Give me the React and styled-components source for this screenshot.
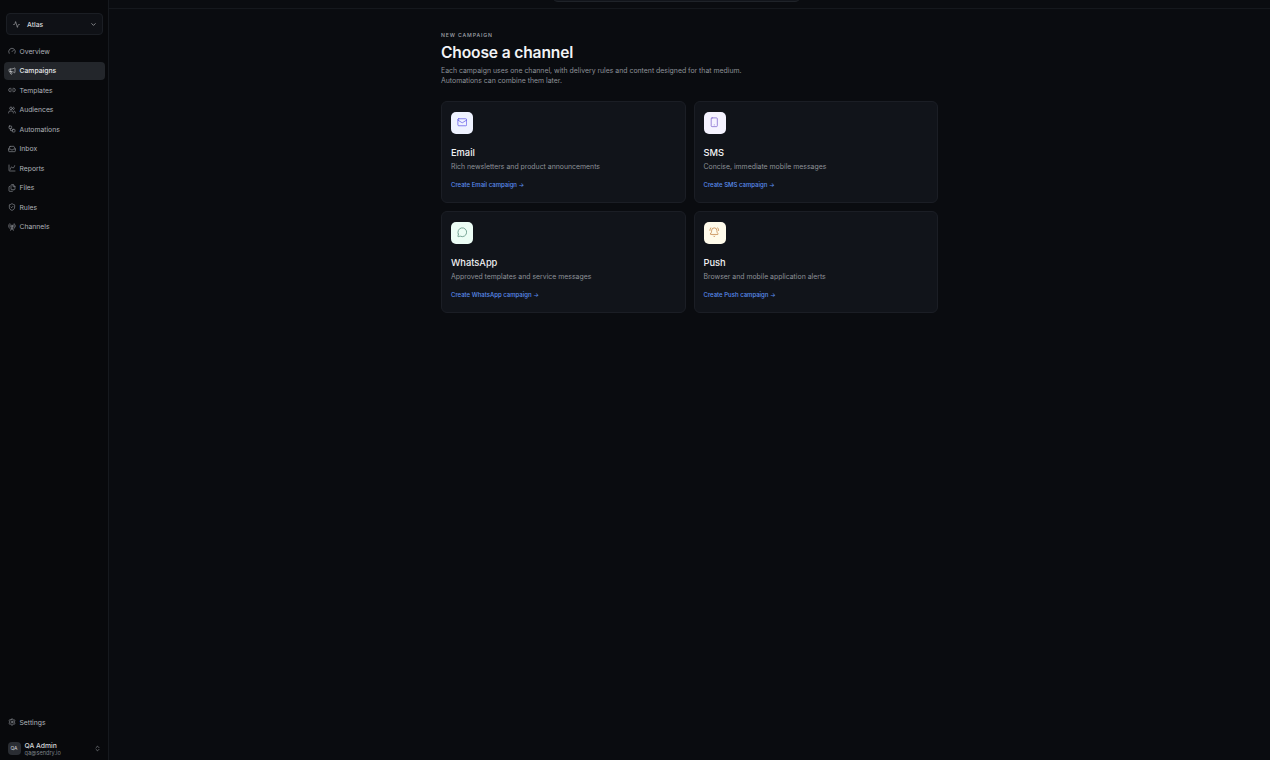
import React from 'react'
import styled, { createGlobalStyle } from 'styled-components'
import {
  Activity, ChevronDown, Gauge, Megaphone, Link2, Users, Workflow, Inbox, ChartSpline, Files,
  ShieldCheck, RadioTower, Settings, Mail, Smartphone, MessageCircle, BellRing, ChevronsUpDown
} from 'lucide-react'

const navItems = [
  { label: 'Overview', icon: Gauge },
  { label: 'Campaigns', icon: Megaphone, active: true },
  { label: 'Templates', icon: Link2 },
  { label: 'Audiences', icon: Users },
  { label: 'Automations', icon: Workflow },
  { label: 'Inbox', icon: Inbox },
  { label: 'Reports', icon: ChartSpline },
  { label: 'Files', icon: Files },
  { label: 'Rules', icon: ShieldCheck },
  { label: 'Channels', icon: RadioTower },
]

const channels = [
  { name: 'Email', text: 'Rich newsletters and product announcements', icon: Mail, bg: '#eef2ff', fg: '#4f46e5' },
  { name: 'SMS', text: 'Concise, immediate mobile messages', icon: Smartphone, bg: '#f5f3ff', fg: '#6d4fc7' },
  { name: 'WhatsApp', text: 'Approved templates and service messages', icon: MessageCircle, bg: '#ecfdf5', fg: '#3f7a68' },
  { name: 'Push', text: 'Browser and mobile application alerts', icon: BellRing, bg: '#fffbeb', fg: '#b8702a' },
]

function App() {
  return (
    <>
      <GlobalStyle />
      <Shell>
        <Sidebar>
          <Brand>
            <BrandMark />
            <BrandName>Sendry</BrandName>
          </Brand>
          <Workspace>
            <WorkspaceIcon><Activity size={7} strokeWidth={1.6} /></WorkspaceIcon>
            <WorkspaceName>Atlas</WorkspaceName>
            <ChevronDown size={7} strokeWidth={2} />
          </Workspace>
          <Nav>
            {navItems.map(({ label, icon: Icon, active }) => (
              <NavItem key={label} $active={active}>
                <Icon size={8} strokeWidth={1.6} />
                {label}
              </NavItem>
            ))}
          </Nav>
          <SideFooter>
            <NavItem>
              <Settings size={8} strokeWidth={1.6} />
              Settings
            </NavItem>
            <UserRow>
              <Avatar>QA</Avatar>
              <UserInfo>
                <UserName>QA Admin</UserName>
                <UserMail>qa@sendry.io</UserMail>
              </UserInfo>
              <ChevronsUpDown size={7} strokeWidth={1.8} />
            </UserRow>
          </SideFooter>
        </Sidebar>
        <Main>
          <Topbar>
            <Search>
              <SearchText>Search</SearchText>
              <Kbd>⌘K</Kbd>
            </Search>
            <PrimaryButton>New campaign</PrimaryButton>
          </Topbar>
          <Content>
            <Eyebrow>NEW CAMPAIGN</Eyebrow>
            <Title>Choose a channel</Title>
            <Lead>
              Each campaign uses one channel, with delivery rules and content designed for that medium. Automations
              can combine them later.
            </Lead>
            <Grid>
              {channels.map(({ name, text, icon: Icon, bg, fg }) => (
                <Card key={name}>
                  <IconTile $bg={bg} $fg={fg}><Icon size={10.5} strokeWidth={1.5} /></IconTile>
                  <CardTitle>{name}</CardTitle>
                  <CardText>{text}</CardText>
                  <CardLink>Create {name} campaign →</CardLink>
                </Card>
              ))}
            </Grid>
          </Content>
        </Main>
      </Shell>
    </>
  )
}

export default App

const GlobalStyle = createGlobalStyle`
  html, body {
    margin: 0;
    height: 100%;
    overflow: hidden;
    background: #0a0c10;
  }
  body {
    font-family: Inter, "Liberation Sans", sans-serif;
    color: #e6e8eb;
  }
`

/* the page is photographed scrolled down a little, so the shell starts above the fold */
const Shell = styled.div`
  display: flex;
  height: 806px;
  margin-top: -46px;
  background: #0a0c10;
`

const Sidebar = styled.aside`
  width: 109px;
  flex-shrink: 0;
  display: flex;
  flex-direction: column;
  padding: 0 3.5px;
  box-sizing: border-box;
  background: #08090c;
  border-right: 1px solid #16191e;
  color: #b9bdc4;
`

const Brand = styled.div`
  display: flex;
  align-items: center;
  gap: 4.5px;
  height: 38px;
  padding: 0 5.5px;
  margin-top: 6px;
  flex-shrink: 0;
`

const BrandMark = styled.div`
  width: 12px;
  height: 12px;
  border-radius: 3px;
  background: #3b62e0;
`

const BrandName = styled.div`
  font-size: 8.5px;
  font-weight: 600;
  color: #f2f3f5;
`

const Workspace = styled.div`
  display: flex;
  align-items: center;
  height: 20px;
  margin: 15px 2px 0;
  padding: 0 5px 0 6px;
  border: 1px solid #1b1e24;
  border-radius: 4px;
  background: #0f1116;
  color: #d5d7db;
`

const WorkspaceIcon = styled.span`
  display: flex;
  width: 9px;
  margin-right: 5.5px;
`

const WorkspaceName = styled.span`
  flex: 1;
  font-size: 6.8px;
  font-weight: 500;
`

const Nav = styled.nav`
  display: flex;
  flex-direction: column;
  gap: 1.5px;
  margin-top: 7px;
`

const NavItem = styled.div`
  display: flex;
  align-items: center;
  gap: 4px;
  height: 18px;
  padding: 0 4px;
  border-radius: 4px;
  font-size: 6.8px;
  font-weight: ${({ $active }) => ($active ? 500 : 400)};
  color: ${({ $active }) => ($active ? '#e6e8eb' : '#aeb2b9')};
  background: ${({ $active }) => ($active ? '#23262b' : 'transparent')};
`

const SideFooter = styled.div`
  margin-top: auto;
  display: flex;
  flex-direction: column;
  gap: 5px;
`

const UserRow = styled.div`
  display: flex;
  align-items: center;
  gap: 4px;
  padding: 0 4px;
  height: 24px;
  color: #aeb2b9;
`

const Avatar = styled.div`
  width: 13px;
  height: 13px;
  border-radius: 4px;
  background: #2a2d33;
  color: #c9ccd1;
  font-size: 5px;
  display: flex;
  align-items: center;
  justify-content: center;
`

const UserInfo = styled.div`
  flex: 1;
`

const UserName = styled.div`
  font-size: 6.8px;
  font-weight: 500;
  color: #d5d7db;
`

const UserMail = styled.div`
  font-size: 5.6px;
  color: #7d828a;
`

const Main = styled.main`
  flex: 1;
  display: flex;
  flex-direction: column;
  min-width: 0;
`

const Topbar = styled.header`
  height: 55px;
  flex-shrink: 0;
  display: flex;
  align-items: center;
  justify-content: flex-end;
  position: relative;
  padding-right: 12px;
  padding-bottom: 20px;
  box-sizing: border-box;
  border-bottom: 1px solid #15181d;
`

const Search = styled.div`
  position: absolute;
  left: 443px;
  bottom: 6px;
  width: 249px;
  height: 22px;
  box-sizing: border-box;
  display: flex;
  align-items: center;
  justify-content: space-between;
  padding: 0 3px 0 8px;
  border: 1px solid #1f2329;
  border-radius: 6px;
  background: #12151b;
`

const SearchText = styled.span`
  font-size: 6.8px;
  color: #6f747c;
`

const Kbd = styled.span`
  padding: 2px 4px;
  font-size: 5.5px;
  border: 1px solid #2b2f36;
  border-radius: 3px;
  color: #8b9097;
`

const PrimaryButton = styled.button`
  width: 68px;
  height: 21px;
  margin-top: 0;
  position: relative;
  top: 3px;
  border: none;
  border-radius: 4px;
  background: #3f7bf2;
  color: #fff;
  font: 500 6.8px Inter, sans-serif;
`

const Content = styled.section`
  width: 497px;
  margin: 0 auto;
  padding-top: 22px;
`

const Eyebrow = styled.div`
  font-size: 5.2px;
  font-weight: 500;
  letter-spacing: 0.85px;
  line-height: 8px;
  color: #a0a4ab;
`

const Title = styled.h1`
  margin: 4px 0 0;
  font-size: 15.6px;
  line-height: 20px;
  font-weight: 600;
  letter-spacing: -0.15px;
  color: #f2f3f5;
`

const Lead = styled.p`
  width: 335px;
  margin: 3px 0 0;
  font-size: 6.9px;
  line-height: 9.8px;
  color: #8d9198;
`

const Grid = styled.div`
  display: grid;
  grid-template-columns: 1fr 1fr;
  gap: 8px;
  margin-top: 15px;
`

const Card = styled.article`
  height: 102px;
  box-sizing: border-box;
  padding: 10px 9px;
  border: 1px solid #1b1e25;
  border-radius: 6px;
  background: #11141a;
`

const IconTile = styled.div`
  width: 22px;
  height: 22px;
  display: flex;
  align-items: center;
  justify-content: center;
  border-radius: 5px;
  background: ${({ $bg }) => $bg};
  color: ${({ $fg }) => $fg};
`

const CardTitle = styled.h3`
  margin: 12px 0 0;
  font-size: 9.3px;
  line-height: 14px;
  font-weight: 500;
  color: #f0f1f3;
`

const CardText = styled.p`
  margin: 2.5px 0 0;
  font-size: 6.9px;
  line-height: 10px;
  color: #8d9198;
`

const CardLink = styled.a`
  display: block;
  margin-top: 8px;
  font-size: 6px;
  line-height: 9px;
  font-weight: 500;
  color: #5b8def;
`
